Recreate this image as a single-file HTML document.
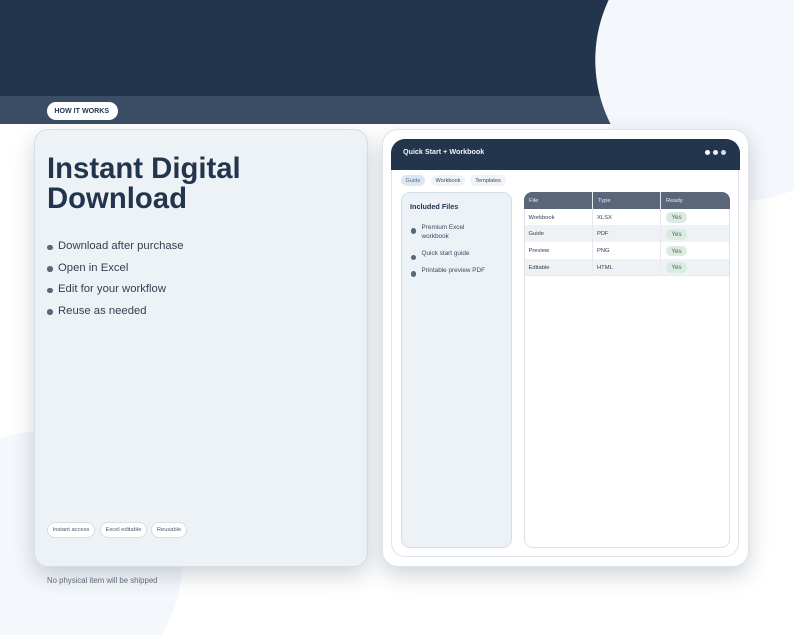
<!DOCTYPE html>
<html lang="en"><head><meta charset="utf-8"><title>Instant Digital Download</title>
<style>
html,body{margin:0;padding:0;width:794px;height:635px;overflow:hidden;background:#fff}
body{position:relative;font-family:"Liberation Sans",sans-serif}
div{box-sizing:border-box;position:absolute}
#w{left:0;top:0;width:794px;height:635px;overflow:hidden;filter:blur(.3px);background:
radial-gradient(circle 142px at 737px 60px,#f4f7fb 99.6%,rgba(244,247,251,0) 100%),
radial-gradient(circle 134px at 48px 564px,#f4f7fb 99.6%,rgba(244,247,251,0) 100%),
linear-gradient(#22354d,#22354d) 0 0/794px 96px no-repeat,
linear-gradient(#3b4d65,#3b4d65) 0 96px/794px 28px no-repeat,
#fff}
.t{white-space:nowrap}
.dot{border-radius:50%;background:#5a677a}
.alt{left:0;width:204px;height:16.7px;background:#eef2f5}
.cell{font-size:5.8px;color:#2e3d50;white-space:nowrap;line-height:10px}
.yes{left:141px;width:21px;height:10.5px;border-radius:5.25px;background:#dcebe2;color:#3f6f55;font-size:6.2px;line-height:11.5px;text-align:center}
.pill{top:522px;height:15.5px;border:1px solid #d8dee5;border-radius:8px;background:#fff;font-size:5.75px;line-height:14.5px;color:#4d5a6b;text-align:center;white-space:nowrap}
.tab{top:175px;height:11px;border-radius:6px;background:#f0f4f8;font-size:5.6px;line-height:12.5px;color:#3b4a5d;text-align:center}
.li{left:58px;font-size:11.3px;line-height:15px;color:#333f50;white-space:nowrap}
.side{left:421.5px;font-size:6.4px;color:#3d4a5c}
.th{top:196px;font-size:5.8px;line-height:10px;color:#e8edf2;white-space:nowrap}
</style></head><body>
<div id="w">
<div class="t" style="left:47px;top:102px;width:71px;height:18px;padding-right:1.5px;border-radius:9px;background:#fff;color:#22354d;font-size:7.1px;font-weight:bold;line-height:18px;text-align:center">HOW IT WORKS</div>

<div style="left:34px;top:129px;width:334px;height:438px;border-radius:14px;background:#edf2f7;border:1.5px solid #d7dee6;box-shadow:0 8px 22px rgba(34,53,77,.22)"></div>
<div style="left:47px;top:154px;font-size:29.3px;line-height:30px;font-weight:bold;color:#22354d">Instant Digital<br>Download</div>
<div class="dot" style="left:47px;top:244.5px;width:5.5px;height:5.5px"></div>
<div class="li" style="top:239px">Download after purchase</div>
<div class="dot" style="left:47px;top:266px;width:5.5px;height:5.5px"></div>
<div class="li" style="top:260.5px">Open in Excel</div>
<div class="dot" style="left:47px;top:287.5px;width:5.5px;height:5.5px"></div>
<div class="li" style="top:282px">Edit for your workflow</div>
<div class="dot" style="left:47px;top:309px;width:5.5px;height:5.5px"></div>
<div class="li" style="top:303.5px">Reuse as needed</div>
<div class="pill" style="left:47px;width:48px">Instant access</div>
<div class="pill" style="left:100px;width:47px">Excel editable</div>
<div class="pill" style="left:151px;width:36px">Reusable</div>
<div class="t" style="left:47px;top:575px;font-size:7.8px;line-height:11px;color:#5f6b7a">No physical item will be shipped</div>

<div style="left:382px;top:129px;width:367px;height:438px;border-radius:16px;background:#fff;border:1.5px solid #dfe3e8;box-shadow:0 8px 22px rgba(34,53,77,.22)"></div>
<div style="left:391px;top:139px;width:348px;height:418px;border-radius:14px;background:#fff;border:1px solid #dfe3e8"></div>
<div style="left:391px;top:139px;width:349px;height:31px;border-radius:14px 14px 0 0;background:#22354d"></div>
<div class="t" style="left:403px;top:147px;font-size:7.17px;line-height:10px;font-weight:bold;color:#f2f5f8">Quick Start + Workbook</div>
<div class="dot" style="left:705px;top:150px;width:5px;height:5px;background:#fff"></div>
<div class="dot" style="left:713px;top:150px;width:5px;height:5px;background:#eef2f6"></div>
<div class="dot" style="left:721px;top:150px;width:5px;height:5px;background:#d5dee8"></div>
<div class="tab" style="left:401px;width:24px;background:#dce7f2;color:#4d6f92">Guide</div>
<div class="tab" style="left:431px;width:34px">Workbook</div>
<div class="tab" style="left:470px;width:36px">Templates</div>

<div style="left:401px;top:192px;width:111px;height:356px;border-radius:9px;background:#edf2f7;border:1px solid #d5dee7"></div>
<div class="t" style="left:410px;top:202px;font-size:7.25px;line-height:10px;font-weight:bold;color:#22354d">Included Files</div>
<div class="dot" style="left:410.5px;top:228px;width:5.5px;height:5.5px"></div>
<div class="side" style="top:222.5px;line-height:9px;width:70px">Premium Excel<br>workbook</div>
<div class="dot" style="left:410.5px;top:254.5px;width:5.5px;height:5.5px"></div>
<div class="side t" style="top:248.5px;line-height:10px">Quick start guide</div>
<div class="dot" style="left:410.5px;top:271px;width:5.5px;height:5.5px"></div>
<div class="side t" style="top:265.5px;line-height:10px">Printable preview PDF</div>

<div style="left:524px;top:192px;width:206px;height:356px;border-radius:9px;background:#fff;border:1px solid #dde2e8"></div>
<div style="left:524px;top:192px;width:206px;height:16.5px;border-radius:8px 8px 0 0;background:#5a677a"></div>
<div style="left:592px;top:192px;width:1px;height:83px;background:#e6eaee"></div>
<div style="left:660px;top:192px;width:1px;height:83px;background:#e6eaee"></div>
<div class="th" style="left:529px">File</div>
<div class="th" style="left:598px">Type</div>
<div class="th" style="left:666px">Ready</div>

<div style="left:525px;top:209px;width:204px;height:67px;border-bottom:1px solid #e6eaee">
<div class="alt" style="top:16.4px"></div>
<div class="alt" style="top:49.7px"></div>
<div class="cell" style="left:3.5px;top:4px">Workbook</div><div class="cell" style="left:72px;top:4px">XLSX</div><div class="yes" style="top:3.3px">Yes</div>
<div class="cell" style="left:3.5px;top:20px">Guide</div><div class="cell" style="left:72px;top:20px">PDF</div><div class="yes" style="top:20px">Yes</div>
<div class="cell" style="left:3.5px;top:37px">Preview</div><div class="cell" style="left:72px;top:37px">PNG</div><div class="yes" style="top:36.7px">Yes</div>
<div class="cell" style="left:3.5px;top:53.7px">Editable</div><div class="cell" style="left:72px;top:53.7px">HTML</div><div class="yes" style="top:53.3px">Yes</div>
</div>
<div style="left:592px;top:209px;width:1px;height:66px;background:#e6eaee"></div>
<div style="left:660px;top:209px;width:1px;height:66px;background:#e6eaee"></div>
</div>
</body></html>
